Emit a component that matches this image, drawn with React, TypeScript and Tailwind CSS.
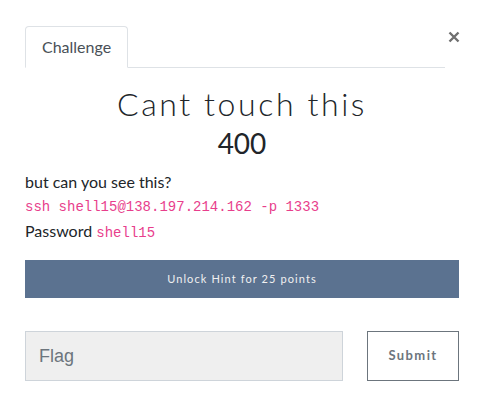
import React from "react";

export default function App() {
  return (
    <div className="w-[484px] h-[415px] bg-white" style={{ fontFamily: "Lato, 'Liberation Sans', sans-serif" }}>
      <div className="pl-[25px] pr-[25px] pt-[26px]">
        <div className="flex items-start">
          <div className="flex-1 flex border-b border-[#dee2e6]">
            <div className="-mb-px h-[42px] px-4 flex items-center border border-[#dee2e6] border-b-white rounded-t-[4px] bg-white text-[16px] text-[#495057]">
              Challenge
            </div>
          </div>
          <button className="w-[14px] pt-[3px] flex justify-end">
            <svg width="12" height="12" viewBox="0 0 12 12" className="mt-[2px] -mr-[1px]">
              <path d="M1.5 1.5 L10.5 10.5 M10.5 1.5 L1.5 10.5" stroke="#6f6f6f" strokeWidth="2.4" strokeLinecap="butt" />
            </svg>
          </button>
        </div>
        <h1 className="text-center mt-[16px] text-[32px] leading-[40px] font-light tracking-[2.6px] text-[#212529]" style={{ fontFamily: "Lato, sans-serif" }}>
          Cant touch this
        </h1>
        <h2 className="text-center mt-[2px] text-[28px] leading-[34px] text-[#212529]">400</h2>
        <div className="mt-[10px] text-[16px] text-[#212529] leading-[24px]">
          <p>but can you see this?</p>
          <p className="mt-[1px] text-[14px] text-[#e83e8c]" style={{ fontFamily: "'Liberation Mono', monospace" }}>
            ssh shell15@138.197.214.162 -p 1333
          </p>
          <p>
            Password{" "}
            <span className="text-[14px] text-[#e83e8c]" style={{ fontFamily: "'Liberation Mono', monospace" }}>
              shell15
            </span>
          </p>
        </div>
        <button className="mt-[15px] w-full h-[38px] bg-[#5b7290] text-[#f0f0f0] text-[11px] tracking-[1.1px]">
          Unlock Hint for 25 points
        </button>
        <div className="mt-[33px] flex items-center justify-between">
          <div className="w-[318px] h-[50px] bg-[#efefef] border border-[#ced4da] flex items-center pl-[13px] text-[18px] text-[#6c757d]" style={{ fontFamily: "'Liberation Sans', Arial, sans-serif" }}>
            Flag
          </div>
          <button className="w-[92px] h-[50px] border border-[#6c757d] text-[13px] font-bold tracking-[1.4px] text-[#6c757d]">
            Submit
          </button>
        </div>
      </div>
    </div>
  );
}
